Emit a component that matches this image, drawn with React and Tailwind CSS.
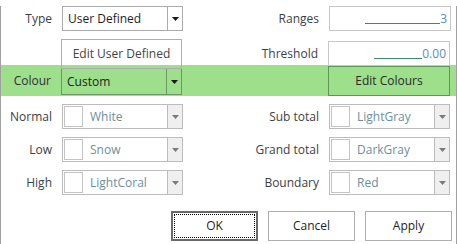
import React from "react";

const font = { fontFamily: '"Open Sans", "Noto Sans", sans-serif' };

function Arrow({ dim }) {
  return (
    <svg width="7" height="4" viewBox="0 0 7 4" className="block">
      <path d="M0 0H7L3.5 4Z" fill={dim ? "#7a7a7a" : "#1a1a1a"} />
    </svg>
  );
}

function Combo({ value, green }) {
  return (
    <div
      className={`flex h-[25px] w-[121px] border ${
        green ? "h-[27px] border-[#6a9a62] bg-transparent" : "border-[#ababab] bg-white"
      }`}
    >
      <div className="flex flex-1 items-center pl-[5px] text-[#1e1e1e]">{value}</div>
      <div
        className={`flex w-[15px] items-center justify-center border-l ${
          green ? "border-[#6a9a62]" : "border-[#ababab]"
        }`}
      >
        <Arrow />
      </div>
    </div>
  );
}

function ColorCombo({ value }) {
  return (
    <div className="flex h-[25px] w-[121px] border border-[#bcbcbc] bg-white">
      <div className="ml-[1px] mt-[1px] h-[21px] w-[19px] border border-[#c4c4c4] bg-white" />
      <div className="flex flex-1 items-center pl-[7px] text-[#6d8f9c]">{value}</div>
      <div className="flex w-[15px] items-center justify-center border-l border-[#bcbcbc] bg-[#efefef]">
        <Arrow dim />
      </div>
    </div>
  );
}

function Masked({ lineW, text }) {
  return (
    <div className="flex h-[25px] w-[122px] items-center justify-end border border-[#c9c9c9] bg-white pr-[3px]">
      <span className={`mt-[9px] h-[1px] ${lineW} bg-[#3f8a68]`} />
      <span className="text-[#5a8db8]">{text}</span>
    </div>
  );
}

function Row({ left, leftCtl, right, rightCtl, className = "" }) {
  return (
    <div className={`flex items-center ${className}`}>
      <div className="w-[51px] text-right text-[#3e3e46]">{left}</div>
      <div className="ml-[10px]">{leftCtl}</div>
      <div className="w-[136px] text-right text-[#3e3e46]">{right}</div>
      <div className="ml-[10px]">{rightCtl}</div>
    </div>
  );
}

function Btn({ children, focused }) {
  return (
    <div
      className={`flex h-[30px] w-[87px] items-center justify-center bg-white text-[#1e1e1e] ${
        focused ? "border-2 border-[#6a6a6a] p-[1px]" : "border border-[#adadad]"
      }`}
    >
      {focused ? (
        <div className="flex h-full w-full items-center justify-center border border-dotted border-black">
          {children}
        </div>
      ) : (
        children
      )}
    </div>
  );
}

export default function App() {
  return (
    <div
      className="h-[244px] w-[457px] border-b border-l border-r border-[#a0a0a0] bg-white text-[12px] leading-none"
      style={font}
    >
      <Row
        className="mt-[6px]"
        left="Type"
        leftCtl={<Combo value="User Defined" />}
        right="Ranges"
        rightCtl={<Masked lineW="w-[75px]" text="3" />}
      />

      <div className="mt-[8px] flex h-[26px] items-start">
        <div className="ml-[60px] relative z-10 flex h-[30px] w-[121px] items-center justify-center border border-[#adadad] text-[#444]">
          Edit User Defined
        </div>
        <div className="w-[136px] self-center pt-[3px] text-right text-[#3e3e46]">Threshold</div>
        <div className="ml-[10px] mt-[2px]">
          <Masked lineW="w-[48px]" text="0.00" />
        </div>
      </div>

      <div className="flex h-[31px] items-center bg-[#9ddf8b]">
        <div className="w-[50px] text-right text-[#2e2e36]">Colour</div>
        <div className="ml-[10px] self-end mb-[1px]">
          <Combo value="Custom" green />
        </div>
        <div className="ml-[146px] flex h-[30px] w-[122px] self-end items-center justify-center border border-[#5e9658] text-[#2a2a2a]">
          Edit Colours
        </div>
      </div>

      <Row
        className="mt-[8px]"
        left="Normal"
        leftCtl={<ColorCombo value="White" />}
        right="Sub total"
        rightCtl={<ColorCombo value="LightGray" />}
      />
      <Row
        className="mt-[8px]"
        left="Low"
        leftCtl={<ColorCombo value="Snow" />}
        right="Grand total"
        rightCtl={<ColorCombo value="DarkGray" />}
      />
      <Row
        className="mt-[8px]"
        left="High"
        leftCtl={<ColorCombo value="LightCoral" />}
        right="Boundary"
        rightCtl={<ColorCombo value="Red" />}
      />

      <div className="mt-[16px] flex justify-end gap-[10px] pr-[4px]">
        <Btn focused>OK</Btn>
        <Btn>Cancel</Btn>
        <Btn>Apply</Btn>
      </div>
    </div>
  );
}
